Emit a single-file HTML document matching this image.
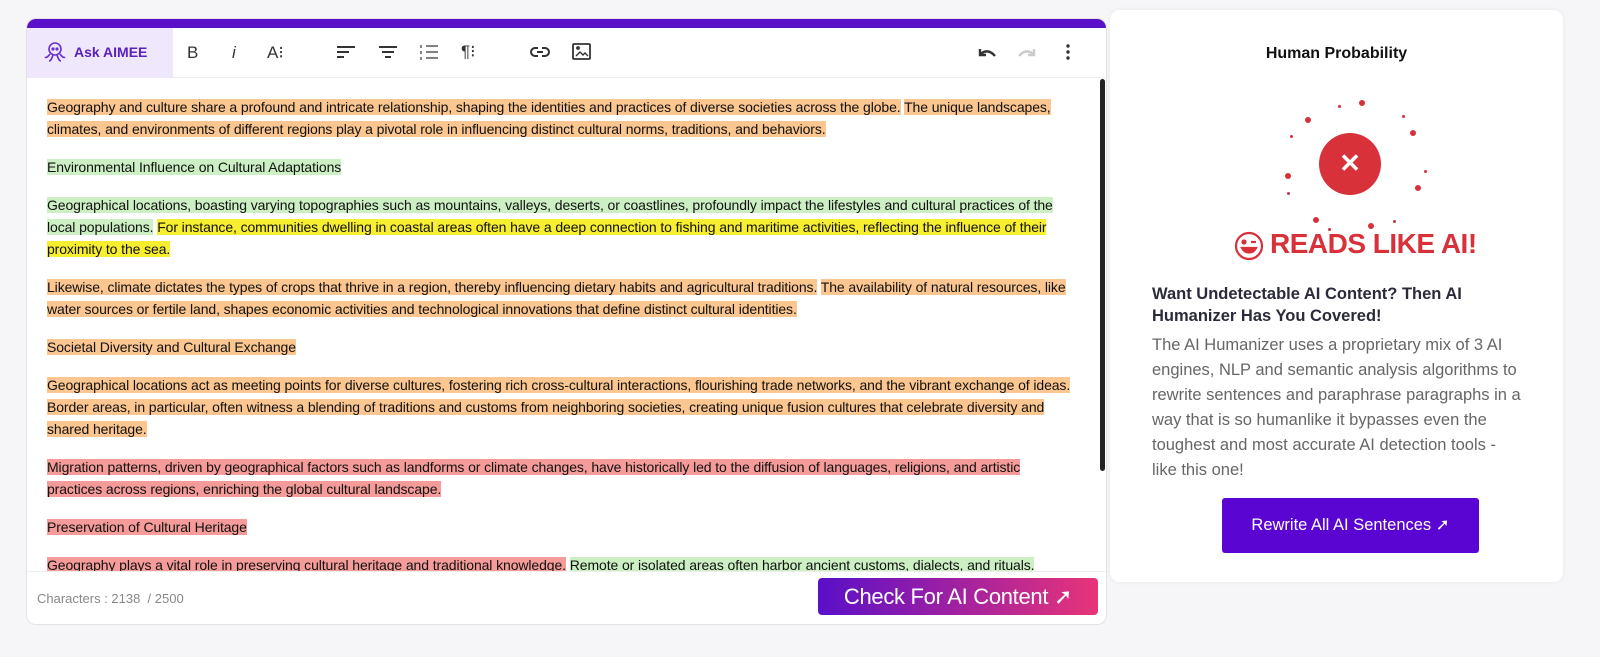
<!DOCTYPE html>
<html><head><meta charset="utf-8"><style>
*{margin:0;padding:0;box-sizing:border-box}
body{width:1600px;height:657px;background:#f6f6f8;font-family:"Liberation Sans",Arial,sans-serif;position:relative;overflow:hidden}
.ed{position:absolute;left:26px;top:18px;width:1081px;height:607px;background:#fff;border:1px solid #e2e2e6;border-radius:10px;overflow:hidden}
.top{position:absolute;left:0;top:0;width:100%;height:9px;background:#5a0fc8}
.tb{position:absolute;left:0;top:9px;width:100%;height:50px;border-bottom:1px solid #eee}
.ask{position:absolute;left:0;top:0;width:146px;height:50px;background:#efe7fb;color:#5a1fc0;font-weight:bold;font-size:14px}
.ic{position:absolute;color:#333;font-size:17px}
.ln{position:absolute;left:20px;font-size:14px;line-height:19px;white-space:nowrap;color:#111;letter-spacing:-0.1px}
.o{background:#fbc68f}.g{background:#cdefc4}.y{background:#f6ee2e}.r{background:#f59c9a}
.sb{position:absolute;left:1073px;top:60px;width:5px;height:392px;background:#222;border-radius:3px}
.ft{position:absolute;left:0;top:552px;width:100%;height:55px;border-top:1px solid #eee;background:#fff}
.rc{position:absolute;left:1110px;top:10px;width:453px;height:572px;background:#fff;border-radius:10px;box-shadow:0 0 6px rgba(0,0,0,.06)}
.dot{position:absolute;background:#d8313a;border-radius:50%}
</style></head><body>
<div class="ed">
<div class="top"></div>
<div class="tb">
<div class="ask"><svg style="position:absolute;left:16px;top:13px" width="24" height="24" viewBox="0 0 24 24" fill="none" stroke="#6a2fd0" stroke-width="1.6"><circle cx="12" cy="8" r="6"/><path d="M7 13c-2 3-4 4-5 3M10 14c-1 3-2 6-4 6M14 14c1 3 2 6 4 6M17 13c2 3 4 4 5 3"/><circle cx="10" cy="8" r=".8"/><circle cx="14" cy="8" r=".8"/></svg><span style="position:absolute;left:47px;top:16px">Ask AIMEE</span></div>
<span class="ic" style="left:160px;top:15px">B</span>
<span class="ic" style="left:205px;top:15px;font-style:italic">i</span>
<span class="ic" style="left:240px;top:15px">A⁝</span>
<svg style="position:absolute;left:310px;top:17px" width="18" height="14" stroke="#333" stroke-width="2"><path d="M0 2h18M0 7h12M0 12h7"/></svg>
<svg style="position:absolute;left:352px;top:17px" width="18" height="14" stroke="#333" stroke-width="2"><path d="M0 2h18M3 7h12M6 12h6"/></svg>
<svg style="position:absolute;left:393px;top:16px" width="18" height="16" stroke="#333" stroke-width="2"><path d="M6 2h12M6 8h12M6 14h12M1 1v3M1 7v3M1 13v3" stroke-width="1.2"/></svg>
<span class="ic" style="left:434px;top:14px">¶⁝</span>
<svg style="position:absolute;left:503px;top:18px" width="20" height="12" fill="none" stroke="#333" stroke-width="2"><path d="M8 2H5a4 4 0 000 8h3M12 2h3a4 4 0 010 8h-3M7 6h6"/></svg>
<svg style="position:absolute;left:545px;top:15px" width="19" height="17" fill="none" stroke="#333" stroke-width="1.8"><rect x="1" y="1" width="17" height="15" rx="1"/><path d="M4 13l4-4 3 3 2-2 3 3" stroke-width="1.4"/><circle cx="6" cy="5" r="1"/></svg>
<svg style="position:absolute;left:950px;top:18px" width="20" height="12" fill="none" stroke="#333" stroke-width="2.4"><path d="M3 3v6h6M3 9c4-5 10-5 15 1"/></svg>
<svg style="position:absolute;left:990px;top:18px" width="20" height="12" fill="none" stroke="#ccc" stroke-width="2.4"><path d="M17 3v6h-6M17 9c-4-5-10-5-15 1"/></svg>
<svg style="position:absolute;left:1039px;top:16px" width="4" height="16" fill="#333"><circle cx="2" cy="2" r="1.7"/><circle cx="2" cy="8" r="1.7"/><circle cx="2" cy="14" r="1.7"/></svg>
</div>
<div class="ln" style="top:79px"><span class="o">Geography and culture share a profound and intricate relationship, shaping the identities and practices of diverse societies across the globe.</span> <span class="o">The unique landscapes,</span></div>
<div class="ln" style="top:101px"><span class="o">climates, and environments of different regions play a pivotal role in influencing distinct cultural norms, traditions, and behaviors.</span></div>
<div class="ln" style="top:139px"><span class="g">Environmental Influence on Cultural Adaptations</span></div>
<div class="ln" style="top:177px"><span class="g">Geographical locations, boasting varying topographies such as mountains, valleys, deserts, or coastlines, profoundly impact the lifestyles and cultural practices of the</span></div>
<div class="ln" style="top:199px"><span class="g">local populations.</span> <span class="y">For instance, communities dwelling in coastal areas often have a deep connection to fishing and maritime activities, reflecting the influence of their</span></div>
<div class="ln" style="top:221px"><span class="y">proximity to the sea.</span></div>
<div class="ln" style="top:259px"><span class="o">Likewise, climate dictates the types of crops that thrive in a region, thereby influencing dietary habits and agricultural traditions.</span> <span class="o">The availability of natural resources, like</span></div>
<div class="ln" style="top:281px"><span class="o">water sources or fertile land, shapes economic activities and technological innovations that define distinct cultural identities.</span></div>
<div class="ln" style="top:319px"><span class="o">Societal Diversity and Cultural Exchange</span></div>
<div class="ln" style="top:357px"><span class="o">Geographical locations act as meeting points for diverse cultures, fostering rich cross-cultural interactions, flourishing trade networks, and the vibrant exchange of ideas.</span></div>
<div class="ln" style="top:379px"><span class="o">Border areas, in particular, often witness a blending of traditions and customs from neighboring societies, creating unique fusion cultures that celebrate diversity and</span></div>
<div class="ln" style="top:401px"><span class="o">shared heritage.</span></div>
<div class="ln" style="top:439px"><span class="r">Migration patterns, driven by geographical factors such as landforms or climate changes, have historically led to the diffusion of languages, religions, and artistic</span></div>
<div class="ln" style="top:461px"><span class="r">practices across regions, enriching the global cultural landscape.</span></div>
<div class="ln" style="top:499px"><span class="r">Preservation of Cultural Heritage</span></div>
<div class="ln" style="top:537px"><span class="r">Geography plays a vital role in preserving cultural heritage and traditional knowledge.</span> <span class="g">Remote or isolated areas often harbor ancient customs, dialects, and rituals.</span></div>
<div class="sb"></div>
<div class="ft">
<span style="position:absolute;left:10px;top:19px;font-size:13px;color:#888">Characters : 2138 &nbsp;/ 2500</span>
<div style="position:absolute;left:791px;top:6px;width:280px;height:37px;border-radius:4px;background:linear-gradient(90deg,#5a0fc8,#e83478);color:#fff;font-size:22px;line-height:37px;text-align:center;letter-spacing:-0.3px">Check For AI Content ➚</div>
</div>
</div>
<div class="rc">
<div style="position:absolute;left:0;width:100%;top:35px;text-align:center;font-size:16px;font-weight:bold;color:#111">Human Probability</div>
<div style="position:absolute;left:209px;top:123px;width:62px;height:62px;border-radius:50%;background:#d8313a;color:#fff;font-size:26px;text-align:center;line-height:60px;font-weight:bold">✕</div>
<div class="dot" style="left:228px;top:95px;width:3px;height:3px"></div>
<div class="dot" style="left:249px;top:90px;width:6px;height:6px"></div>
<div class="dot" style="left:195px;top:107px;width:6px;height:6px"></div>
<div class="dot" style="left:292px;top:105px;width:3px;height:3px"></div>
<div class="dot" style="left:180px;top:125px;width:3px;height:3px"></div>
<div class="dot" style="left:300px;top:120px;width:6px;height:6px"></div>
<div class="dot" style="left:175px;top:163px;width:6px;height:6px"></div>
<div class="dot" style="left:314px;top:160px;width:3px;height:3px"></div>
<div class="dot" style="left:177px;top:182px;width:3px;height:3px"></div>
<div class="dot" style="left:305px;top:175px;width:6px;height:6px"></div>
<div class="dot" style="left:203px;top:207px;width:6px;height:6px"></div>
<div class="dot" style="left:258px;top:213px;width:6px;height:6px"></div>
<div class="dot" style="left:283px;top:210px;width:3px;height:3px"></div>
<div class="dot" style="left:218px;top:218px;width:3px;height:3px"></div>
<svg style="position:absolute;left:124px;top:221px" width="30" height="30" fill="none" stroke="#d8313a" stroke-width="2.2"><circle cx="15" cy="15" r="13"/><path d="M8 17c3 6 11 6 14 0z" fill="#d8313a"/><circle cx="10" cy="11" r="1.5" fill="#d8313a"/><path d="M17 11h5"/></svg>
<div style="position:absolute;left:160px;top:218px;font-size:28px;font-weight:bold;color:#d8313a;letter-spacing:-0.5px">READS LIKE AI!</div>
<div style="position:absolute;left:42px;top:273px;width:400px;font-size:16.5px;line-height:22px;font-weight:bold;color:#2a2a3a">Want Undetectable AI Content? Then AI<br>Humanizer Has You Covered!</div>
<div style="position:absolute;left:42px;top:323px;width:410px;font-size:16.5px;line-height:25px;color:#666">The AI Humanizer uses a proprietary mix of 3 AI<br>engines, NLP and semantic analysis algorithms to<br>rewrite sentences and paraphrase paragraphs in a<br>way that is so humanlike it bypasses even the<br>toughest and most accurate AI detection tools -<br>like this one!</div>
<div style="position:absolute;left:112px;top:488px;width:257px;height:55px;background:#5a05d2;border-radius:3px;color:#fff;font-size:16.5px;line-height:55px;text-align:center">Rewrite All AI Sentences ➚</div>
</div>
</body></html>
